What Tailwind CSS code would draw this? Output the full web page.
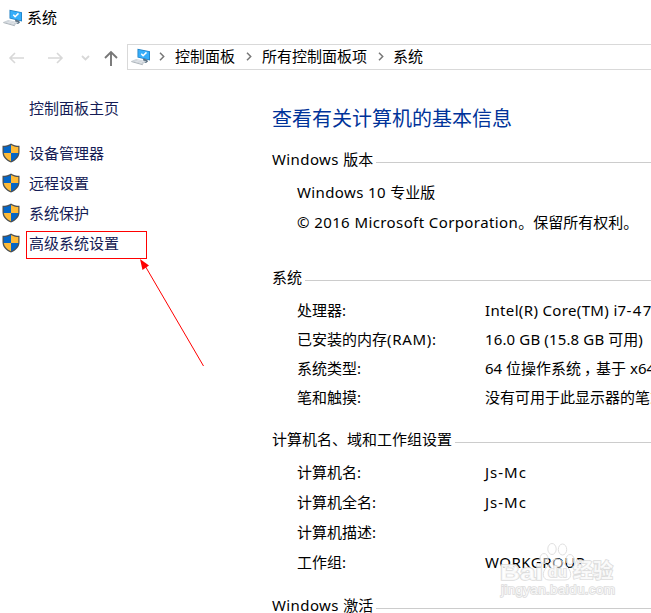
<!DOCTYPE html>
<html lang="zh-CN">
<head>
<meta charset="utf-8">
<title>系统</title>
<script src="https://cdn.jsdelivr.net/npm/@tailwindcss/browser@4"></script>
</head>
<body class="bg-white">
<svg class="hidden">
  <symbol id="pc" viewBox="0 0 20 18">
    <path d="M6.5.8 19 3.2v9.200L6.500 9.500z" fill="#1d7fc4"/>
    <path d="M7.300 1.700 18.200 3.800v7.600L7.300 8.900z" fill="#37aefa"/>
    <path d="m10.300 5.800 1.800 1.900 3.400-3.300" fill="none" stroke="#fff" stroke-width="1.500"/>
    <path d="m12 10.500 4 1 1 2-2 1.500-5-1.200 2.300-.8z" fill="#5b7183"/>
    <path d="m.3 13 5-2 10 2.300-3.500 2.900z" fill="#c9d0d6"/>
    <path d="m.3 13 11.500 3.200v1L.3 14z" fill="#a9b1b8"/>
    <path d="m3.500 12.900 7.500 1.900M5.500 12l7.500 1.700" stroke="#f1f4f6" stroke-width=".6"/>
  </symbol>
  <symbol id="shield" viewBox="0 0 18 20">
    <path d="M9 .4C6.800 2 3.800 2.700.5 2.700V9c0 5 3.200 8.300 8.500 10.600C14.300 17.300 17.500 14 17.500 9V2.700C14.200 2.700 11.200 2 9 .4z" fill="#4d5052"/>
    <path d="M9 1.900C7 3.200 4.400 3.900 1.700 4v6H9z" fill="#0466c8"/>
    <path d="M9 1.900C11 3.200 13.600 3.900 16.300 4v6H9z" fill="#ffba35"/>
    <path d="M1.800 10C2.200 13.800 4.800 16.300 9 18.300V10z" fill="#ffba35"/>
    <path d="M16.200 10C15.800 13.800 13.200 16.300 9 18.300V10z" fill="#0466c8"/>
  </symbol>
  <symbol id="chev" viewBox="0 0 6 9"><path d="M1 .8 4.700 4.500 1 8.200" fill="none" stroke="#777" stroke-width="1.500"/></symbol>
</svg>
<div class="relative flex h-[613px] w-[651px] flex-col overflow-hidden bg-white font-['Noto_Sans','Noto_Sans_CJK_SC',sans-serif] text-[15px] leading-[22px] whitespace-nowrap text-black">
  <header class="flex h-9 shrink-0 items-center pl-[3px]">
    <svg class="h-[18px] w-5"><use href="#pc"/></svg>
    <span class="mb-[2px] ml-1">系统</span>
  </header>
  <nav class="flex h-[42px] shrink-0 items-center">
    <svg class="ml-2 h-4 w-[18px]" viewBox="0 0 18 16" fill="none" stroke="#d8d8d8" stroke-width="1.600"><path d="M16 9H2M7 4 2 9l5 5"/></svg>
    <svg class="ml-[21px] h-4 w-[18px]" viewBox="0 0 18 16" fill="none" stroke="#d8d8d8" stroke-width="1.600"><path d="M1 9h14M10 4l5 5-5 5"/></svg>
    <svg class="ml-4 h-4 w-[10px]" viewBox="0 0 10 16" fill="none" stroke="#d8d8d8" stroke-width="1.800"><path d="m1 7 3.500 3.500L8 7"/></svg>
    <svg class="mt-[2px] ml-3 h-4 w-4" viewBox="0 0 16 16" fill="none" stroke="#777" stroke-width="1.900"><path d="M8 16V2M2 8l6-6 6 6"/></svg>
    <div class="ml-2 flex h-[26px] flex-1 items-center border border-r-0 border-[#d9d9d9] pb-[2px] pl-[3px]">
      <svg class="mt-px h-[18px] w-5"><use href="#pc"/></svg>
      <svg class="ml-[8px] h-[9px] w-[6px]"><use href="#chev"/></svg>
      <span class="ml-[10px]">控制面板</span>
      <svg class="ml-[11px] h-[9px] w-[6px]"><use href="#chev"/></svg>
      <span class="ml-[10px]">所有控制面板项</span>
      <svg class="ml-[11px] h-[9px] w-[6px]"><use href="#chev"/></svg>
      <span class="ml-[9px]">系统</span>
    </div>
  </nav>
  <div class="flex min-h-0 flex-1">
    <aside class="w-[272px] shrink-0 pt-[15px] text-[#151c55]">
      <div class="mb-[15px] flex h-[30px] items-center pl-[29px]">控制面板主页</div>
      <div class="flex h-[30px] items-center pl-0.5"><svg class="mr-[9px] mb-px h-5 w-[18px]"><use href="#shield"/></svg>设备管理器</div>
      <div class="flex h-[30px] items-center pl-0.5"><svg class="mr-[9px] mb-px h-5 w-[18px]"><use href="#shield"/></svg>远程设置</div>
      <div class="flex h-[30px] items-center pl-0.5"><svg class="mr-[9px] mb-px h-5 w-[18px]"><use href="#shield"/></svg>系统保护</div>
      <div class="flex h-[30px] items-center pl-0.5"><svg class="mr-[9px] mb-px h-5 w-[18px]"><use href="#shield"/></svg>高级系统设置</div>
    </aside>
    <main class="min-w-0 flex-1 pt-[26px]">
      <h1 class="flex h-[30px] items-center text-[20px] text-[#003399]">查看有关计算机的基本信息</h1>

      <section class="mt-3">
        <h2 class="flex h-[26px] items-center"><span><span class="tracking-[0.4px]">Windows </span>版本</span><i class="mt-[7px] ml-[3px] h-px flex-1 bg-[#ccc]"></i></h2>
        <div class="mt-[5px] pl-[25px]">
          <p class="flex h-[30px] items-center"><span><span class="tracking-[0.38px]">Windows 10 </span>专业版</span></p>
          <p class="flex h-[30px] items-center"><span><span class="tracking-[0.4px]">© 2016 Microsoft Corporation</span><span class="font-['Noto_Sans_CJK_SC']">。保留所有权利。</span></span></p>
        </div>
      </section>

      <section class="mt-[27px]">
        <h2 class="flex h-[26px] items-center">系统<i class="mt-[7px] ml-[3px] h-px flex-1 bg-[#ccc]"></i></h2>
        <dl class="mt-[5px] grid auto-rows-[29px] grid-cols-[188px_1fr] items-center pl-[25px]">
          <dt>处理器:</dt><dd><span class="tracking-[0.35px]">Intel(R) Core(TM) i7</span><span class="tracking-[1.4px]">-47</span></dd>
          <dt>已安装的内存<span class="tracking-[0.7px]">(RAM):</span></dt><dd><span class="tracking-[0.14px]">16.0 GB (15.8 GB </span>可用)</dd>
          <dt>系统类型:</dt><dd>64 位操作系统<span class="inline-block translate-x-[3px]">，</span>基于 x64</dd>
          <dt>笔和触摸:</dt><dd>没有可用于此显示器的笔或</dd>
        </dl>
      </section>

      <section class="mt-[15px]">
        <h2 class="flex h-[26px] items-center">计算机名、域和工作组设置<i class="mt-[7px] ml-[3px] h-px flex-1 bg-[#ccc]"></i></h2>
        <dl class="mt-[5px] grid auto-rows-[30px] grid-cols-[188px_1fr] items-center pl-[25px]">
          <dt>计算机名:</dt><dd class="tracking-[1px]">Js-Mc</dd>
          <dt>计算机全名:</dt><dd class="tracking-[1px]">Js-Mc</dd>
          <dt>计算机描述:</dt><dd></dd>
          <dt>工作组:</dt><dd class="tracking-[0.5px]">WORKGROUP</dd>
        </dl>
      </section>

      <section class="mt-[15px]">
        <h2 class="flex h-[26px] items-center"><span><span class="tracking-[0.4px]">Windows </span>激活</span><i class="mt-[7px] ml-[3px] h-px flex-1 bg-[#ccc]"></i></h2>
      </section>
    </main>
  </div>

  <!-- highlight box and pointer arrow -->
  <div class="absolute top-[231px] left-[26px] h-7 w-[121px] border border-[#f00]"></div>
  <svg class="absolute top-[255px] left-[135px] h-[115px] w-[75px]" viewBox="135 255 75 115"><path d="M144 264 203.500 366" stroke="#f00" stroke-width="1" fill="none"/><path d="m140 259 9 6.500-6.500 4.500z" fill="#f00"/></svg>

  <!-- watermark -->
  <svg class="absolute top-[540px] left-[494px] h-[62px] w-[125px] font-['Liberation_Sans','Noto_Sans_CJK_SC',sans-serif]" viewBox="494 540 125 62">
    <g fill="#fff" fill-opacity=".5" stroke="#e0e0e0" stroke-width="1">
      <ellipse cx="544" cy="558.500" rx="4" ry="5"/><ellipse cx="552" cy="549" rx="4.200" ry="5.500"/><ellipse cx="562.500" cy="549.500" rx="4.200" ry="5.500"/><ellipse cx="570" cy="559.500" rx="4" ry="5"/>
      <path d="M557 559c5 0 7 5 11 9s4 12-3 12h-16c-7 0-7-8-3-12s6-9 11-9z"/>
    </g>
    <g fill="#fff" fill-opacity=".8" stroke="#dcdcdc" stroke-width="1.600" paint-order="stroke" font-weight="bold">
      <text x="500" y="580" font-size="22" textLength="43" lengthAdjust="spacingAndGlyphs">Bai</text>
      <text x="548" y="577" font-size="15" textLength="19" lengthAdjust="spacingAndGlyphs">du</text>
      <text x="573" y="578" font-size="20" textLength="40" lengthAdjust="spacingAndGlyphs">经验</text>
      <text x="501" y="594" font-size="13.500" font-weight="normal" textLength="114">jingyan.baidu.com</text>
    </g>
  </svg>
</div>
</body>
</html>
